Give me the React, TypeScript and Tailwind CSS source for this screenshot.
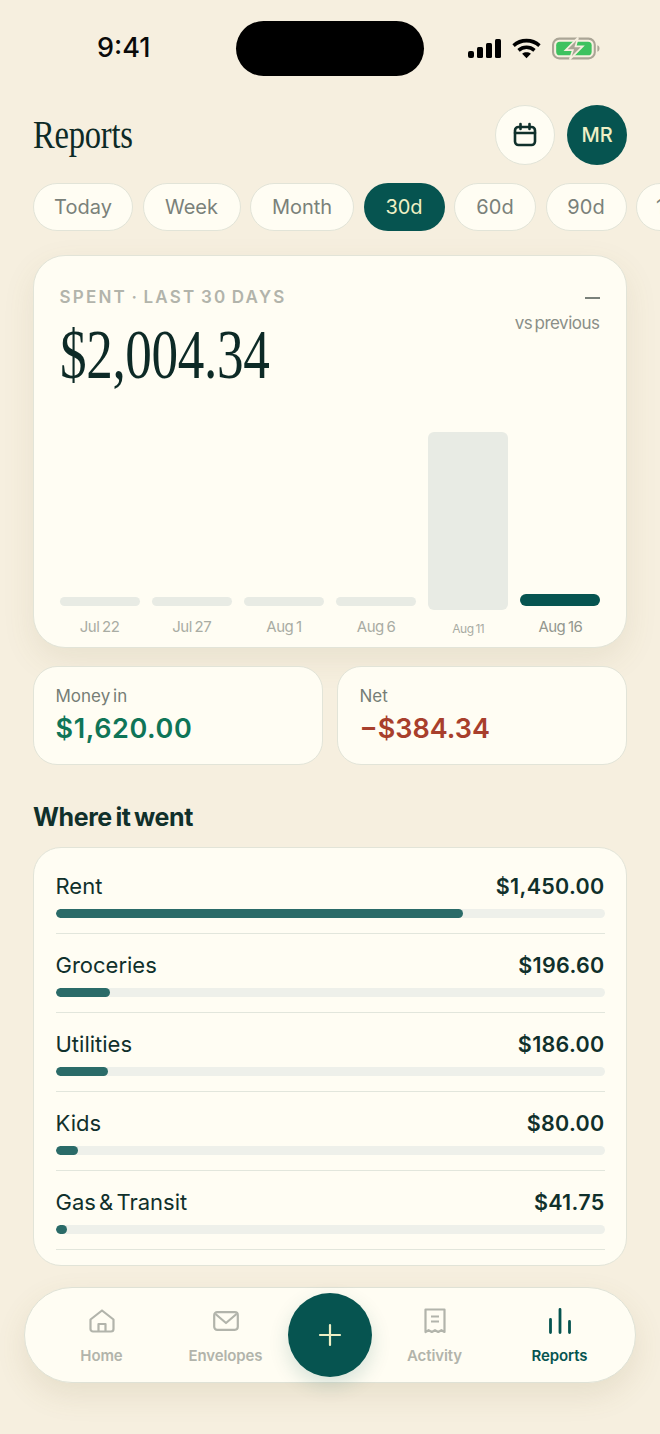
import React from "react";

const sans = "font-['Inter','Noto_Sans',sans-serif]";

const chips = ["Today", "Week", "Month", "30d", "60d", "90d", "1y"];
const chipWidths = ["w-[100px]", "w-[98px]", "w-[104px]", "w-[81px]", "w-[82px]", "w-[81px]", "w-[80px]"];

const bars = [
  { label: "Jul 22", bar: "h-[9px] mb-[4px] rounded-full bg-[#e8ebe4]", text: "text-[15px] text-[#a9aca3]" },
  { label: "Jul 27", bar: "h-[9px] mb-[4px] rounded-full bg-[#e8ebe4]", text: "text-[15px] text-[#a9aca3]" },
  { label: "Aug 1", bar: "h-[9px] mb-[4px] rounded-full bg-[#e8ebe4]", text: "text-[15px] text-[#a9aca3]" },
  { label: "Aug 6", bar: "h-[9px] mb-[4px] rounded-full bg-[#e8ebe4]", text: "text-[15px] text-[#a9aca3]" },
  { label: "Aug 11", bar: "h-[178px] rounded-[6px] bg-[#e8ebe4]", text: "text-[12px] text-[#a9aca3] pt-[3px]" },
  { label: "Aug 16", bar: "h-[12px] mb-[4px] rounded-full bg-[#065450]", text: "text-[15px] text-[#93978f]" },
];

const rows = [
  { name: "Rent", amount: "$1,450.00", fill: "w-[74.3%]" },
  { name: "Groceries", amount: "$196.60", fill: "w-[10%]" },
  { name: "Utilities", amount: "$186.00", fill: "w-[9.5%]" },
  { name: "Kids", amount: "$80.00", fill: "w-[4.1%]" },
  { name: "Gas & Transit", amount: "$41.75", fill: "w-[2.1%]" },
];

function StatusIcons() {
  return (
    <div className="flex items-center gap-[11px]">
      <svg width="33" height="20" viewBox="0 0 33 20" fill="#000">
        <rect x="0" y="12" width="6" height="7" rx="2" />
        <rect x="9" y="8" width="6" height="11" rx="1.5" />
        <rect x="18" y="4" width="6" height="15" rx="1.5" />
        <rect x="27" y="0" width="6" height="19" rx="1.5" />
      </svg>
      <svg width="29" height="21" viewBox="0 0 28 20" fill="none" stroke="#000" strokeWidth="3.4">
        <path d="M1.5 7.2C8.6 .8 19.4 .8 26.5 7.2" />
        <path d="M6.3 11.8C10.8 7.9 17.2 7.9 21.7 11.8" />
        <path d="M14 19.5l-4.2-4.4c2.4-1.9 6-1.9 8.4 0z" fill="#000" stroke="none" />
      </svg>
      <svg width="48" height="23" viewBox="0 0 46 22" fill="none">
        <rect x="1" y="1.5" width="40" height="19" rx="6" stroke="#aaa596" strokeWidth="2" />
        <path d="M43.5 8v6c1.4-.4 2-1.6 2-3s-.6-2.6-2-3z" fill="#aaa596" />
        <rect x="4" y="4.5" width="34" height="13" rx="3.5" fill="#3ec25f" />
        <path d="M25 0.5L13 12.5h7l-3 9 12.5-12.5h-7z" fill="#aaa596" stroke="#f6efdf" strokeWidth="1.6" />
      </svg>
    </div>
  );
}

function NavItem({ label, icon, active, width }: { label: string; icon: React.ReactNode; active?: boolean; width: string }) {
  return (
    <div className={`flex flex-col items-center pt-[2px] ${width}`}>
      <div className="h-[28px] flex items-center justify-center">{icon}</div>
      <span className={`mt-[11px] text-[15px] leading-[20px] font-semibold tracking-[-0.1px] ${active ? "text-[#065450]" : "text-[#b2b4ab]"}`}>{label}</span>
    </div>
  );
}

export default function App() {
  return (
    <div className={`${sans} w-[660px] h-[1434px] overflow-hidden bg-[#f6efdf] text-[#10302b] flex flex-col`}>
      <div className="h-[105px] shrink-0 flex items-start pt-[21px] pl-[97px] pr-[60px] justify-between">
        <span className="w-[139px] mt-[10px] text-[27px] leading-[34px] font-medium text-[#0a0a0a]">9:41</span>
        <div className="w-[188px] h-[55px] rounded-full bg-black" />
        <div className="flex-1 flex justify-end mt-[16px]">
          <StatusIcons />
        </div>
      </div>

      <div className="pl-[33px] pr-[33px] h-[60px] shrink-0 flex items-center justify-between">
        <h1 className="-mt-[2px] font-['Liberation_Serif',serif] text-[41px] leading-[60px] font-normal text-[#0d2a26] origin-left scale-x-[0.795] tracking-[-0.3px] whitespace-nowrap">Reports</h1>
        <div className="flex gap-[12px]">
          <div className="w-[60px] h-[60px] rounded-full bg-[#fffdf3] border-[1.5px] border-[#e2e4d8] flex items-center justify-center">
            <svg width="26" height="26" viewBox="0 0 26 26" fill="none" stroke="#10302b" strokeWidth="2.6" strokeLinecap="round" strokeLinejoin="round">
              <rect x="3" y="5" width="20" height="18" rx="3.5" />
              <path d="M3 11h20M8.5 2v5M17.5 2v5" />
            </svg>
          </div>
          <div className="w-[60px] h-[60px] rounded-full bg-[#065450] flex items-center justify-center text-[20px] font-medium text-[#eef0c5]">MR</div>
        </div>
      </div>

      <div className="mt-[18px] pl-[33px] flex gap-[9.5px] shrink-0 overflow-hidden">
        {chips.map((c, i) => (
          <div
            key={c}
            className={`${chipWidths[i]} h-[48px] shrink-0 rounded-full flex items-center text-[20px] ${
              c === "1y" ? "justify-start pl-[19px]" : "justify-center"
            } ${c === "30d" ? "bg-[#065450] text-[#eef0c5]" : "bg-[#fffdf3] border-[1.5px] border-[#e2e4d8] text-[#7a817a]"}`}
          >
            {c}
          </div>
        ))}
      </div>

      <div className="mt-[24px] mx-[33px] h-[393px] shrink-0 rounded-[32px] bg-[#fffdf3] border-[1.5px] border-[#e2e4d8] shadow-[0_12px_32px_rgba(120,110,60,0.10)] px-[25.5px] flex flex-col">
        <div className="flex justify-between items-start">
          <div>
            <div className="mt-[29px] text-[17px] leading-[24px] font-semibold tracking-[2.2px] [word-spacing:-2px] text-[#b2b4ab]">SPENT · LAST 30 DAYS</div>
            <div className="mt-[8px] font-['Liberation_Serif',serif] text-[70px] leading-[76px] text-[#0d2a26] origin-left scale-x-[0.76] tracking-[-0.5px] whitespace-nowrap">$2,004.34</div>
          </div>
          <div className="flex flex-col items-end pt-[41px] pr-[1px]">
            <div className="w-[15px] h-[2px] bg-[#7a817a]" />
            <div className="mt-[13px] text-[17px] leading-[22px] text-[#8a8f88] tracking-[-0.5px] [word-spacing:-2px]">vs previous</div>
          </div>
        </div>
        <div className="mt-auto grid grid-cols-6 gap-x-[12px]">
          {bars.map((b) => (
            <div key={b.label} className="flex flex-col justify-end">
              <div className={b.bar} />
            </div>
          ))}
          {bars.map((b) => (
            <div key={b.label} className={`h-[35px] flex items-center justify-center tracking-[-0.5px] [word-spacing:-1px] ${b.text}`}>
              {b.label}
            </div>
          ))}
        </div>
        <div className="h-[2px]" />
      </div>

      <div className="mt-[18px] mx-[33px] flex gap-[14px] shrink-0">
        {[
          { label: "Money in", value: "$1,620.00", color: "text-[#0f7558] tracking-[0.6px]" },
          { label: "Net", value: "−$384.34", color: "text-[#a83f2c] tracking-[0px]" },
        ].map((s) => (
          <div key={s.label} className="flex-1 h-[99px] rounded-[24px] bg-[#fffdf3] border-[1.5px] border-[#e2e4d8] pl-[21.5px] pt-[17px]">
            <div className="text-[17px] leading-[24px] text-[#767d76] [word-spacing:-2px]">{s.label}</div>
            <div className={`mt-[3px] text-[27px] leading-[36px] font-semibold ${s.color}`}>{s.value}</div>
          </div>
        ))}
      </div>

      <h2 className="mt-[36px] mx-[33px] text-[25px] leading-[32px] font-bold tracking-[-0.4px] [word-spacing:-2px] text-[#10302b] shrink-0">Where it went</h2>

      <div className="mt-[14px] mx-[33px] h-[419px] shrink-0 rounded-[28px] bg-[#fffdf3] border-[1.5px] border-[#e2e4d8] px-[21.5px] pt-[23.5px]">
        {rows.map((r) => (
          <div key={r.name} className="mb-[16.5px]">
            <div className="flex justify-between h-[28px] items-center">
              <span className="text-[22px] leading-[28px] [word-spacing:-3px] text-[#10302b]">{r.name}</span>
              <span className="text-[21.5px] leading-[28px] font-semibold tracking-[0.3px] text-[#10302b]">{r.amount}</span>
            </div>
            <div className="mt-[9px] h-[9px] rounded-full bg-[#eef0ea] overflow-hidden">
              <div className={`h-full rounded-full bg-[#2a6b68] ${r.fill}`} />
            </div>
            <div className="mt-[15px] h-[1.5px] bg-[#e2e6dc]" />
          </div>
        ))}
      </div>

      <div className="mt-[21px] mx-[24px] h-[96px] shrink-0 rounded-full bg-[#fffdf3] border-[1.5px] border-[#dfe2d6] shadow-[0_12px_30px_rgba(120,110,60,0.12)] flex items-center pl-[14.5px]">
        <NavItem
          label="Home"
          width="w-[124px]"
          icon={
            <svg width="26" height="24" viewBox="0 0 26 24" fill="none" stroke="#b2b4ab" strokeWidth="2.2" strokeLinejoin="round">
              <path d="M1.5 10.5L13 1.5l11.5 9v9.5a2.5 2.5 0 0 1-2.5 2.5H4A2.5 2.5 0 0 1 1.5 20z" />
              <path d="M9.5 22.5V15h7v7.5" />
            </svg>
          }
        />
        <NavItem
          label="Envelopes"
          width="w-[124px]"
          icon={
            <svg width="26" height="20" viewBox="0 0 26 20" fill="none" stroke="#b2b4ab" strokeWidth="2.2" strokeLinejoin="round">
              <rect x="1.2" y="1.2" width="23.6" height="17.6" rx="3" />
              <path d="M2.5 3L13 12 23.5 3" />
            </svg>
          }
        />
        <div className="w-[84px] h-[84px] shrink-0 rounded-full bg-[#065450] shadow-[0_8px_20px_rgba(6,84,80,0.16)] flex items-center justify-center">
          <svg width="24" height="24" viewBox="0 0 24 24" fill="none" stroke="#eef0c5" strokeWidth="2.2" strokeLinecap="round">
            <path d="M12 2v20M2 12h20" />
          </svg>
        </div>
        <NavItem
          label="Activity"
          width="w-[126px]"
          icon={
            <svg width="22" height="26" viewBox="0 0 22 26" fill="none" stroke="#b2b4ab" strokeWidth="2.2" strokeLinejoin="round">
              <path d="M1.5 1.5h19v22.5l-3.1-1.8-3.2 1.8-3.2-1.8-3.2 1.8-3.2-1.8-3.1 1.8z" />
              <path d="M7 8.5h8M7 13.5h8" />
            </svg>
          }
        />
        <NavItem
          label="Reports"
          active
          width="w-[124px]"
          icon={
            <svg width="24" height="26" viewBox="0 0 24 26" fill="none" stroke="#065450" strokeWidth="2.8" strokeLinecap="round">
              <path d="M2.5 11.5V24.5M12 1.5V24.5M21.5 13.5V24.5" />
            </svg>
          }
        />
      </div>
    </div>
  );
}
